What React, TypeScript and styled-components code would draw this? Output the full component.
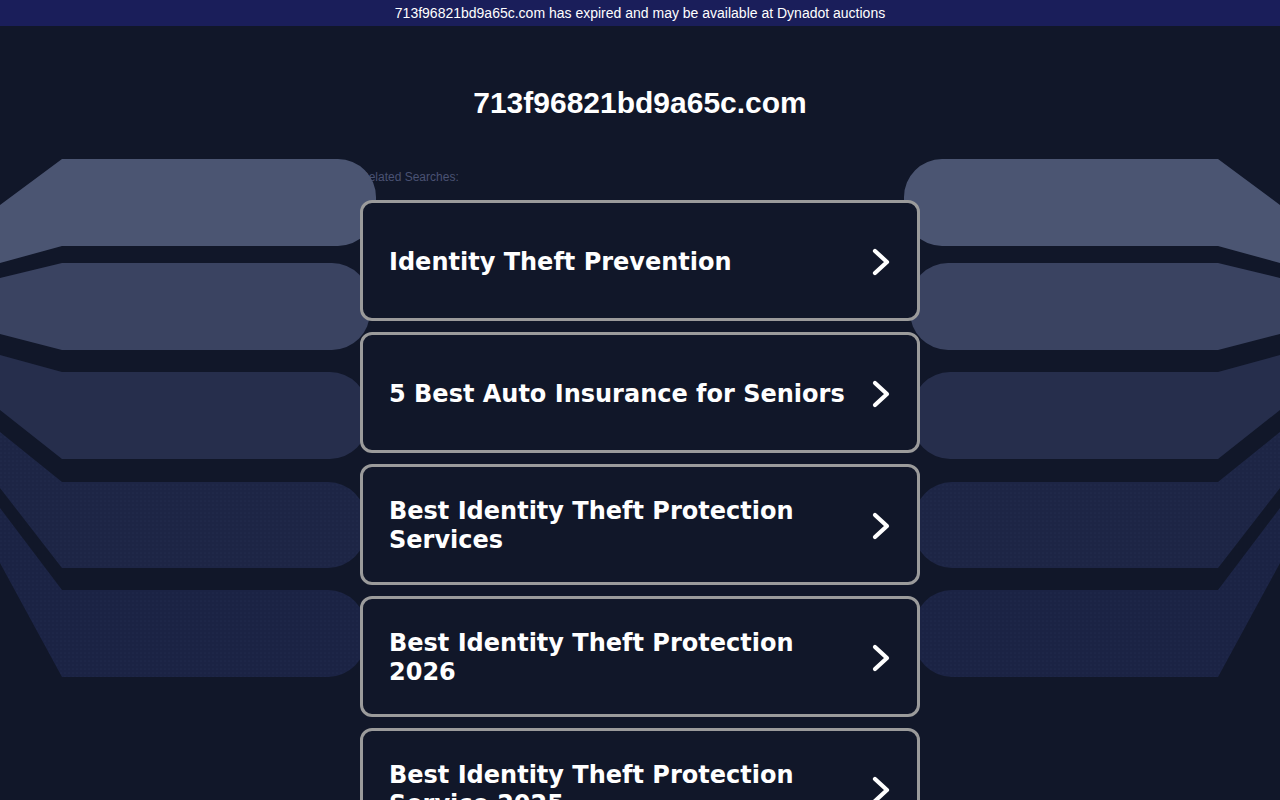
import React from 'react';
import styled, { createGlobalStyle } from 'styled-components';

const GlobalStyle = createGlobalStyle`
  html, body {
    margin: 0;
    padding: 0;
    background: #111729;
  }
  body {
    font-family: 'Liberation Sans', Arial, sans-serif;
    overflow: hidden;
  }
`;

const searches = [
  'Identity Theft Prevention',
  '5 Best Auto Insurance for Seniors',
  'Best Identity Theft Protection Services',
  'Best Identity Theft Protection 2026',
  'Best Identity Theft Protection Service 2025',
];

// left-hand band shapes; the right side is the same set mirrored
const bands = [
  { d: 'M0,205 L62,159 H338 A38,38 0 0 1 376,197 V208 A38,38 0 0 1 338,246 H62 L0,263 Z', fill: '#4b5572' },
  { d: 'M0,278 L62,263 H332 A38,38 0 0 1 370,301 V312 A38,38 0 0 1 332,350 H62 L0,334 Z', fill: '#3a4361' },
  { d: 'M0,355 L62,372 H330 A38,38 0 0 1 368,410 V421 A38,38 0 0 1 330,459 H62 L0,410 Z', fill: '#262e4c' },
  { d: 'M0,432 L62,482 H328 A38,38 0 0 1 366,520 V530 A38,38 0 0 1 328,568 H62 L0,488 Z', fill: 'url(#dots4)' },
  { d: 'M0,508 L62,590 H328 A38,38 0 0 1 366,628 V639 A38,38 0 0 1 328,677 H62 L0,563 Z', fill: 'url(#dots5)' },
];

const Backdrop = () => (
  <Decor viewBox="0 0 1280 800" aria-hidden="true">
    <defs>
      <pattern id="dots4" width="4" height="4" patternUnits="userSpaceOnUse">
        <rect width="4" height="4" fill="#1d2545" />
        <circle cx="1" cy="1" r="0.55" fill="#283156" />
      </pattern>
      <pattern id="dots5" width="4" height="4" patternUnits="userSpaceOnUse">
        <rect width="4" height="4" fill="#1b2344" />
        <circle cx="1" cy="1" r="0.55" fill="#262f55" />
      </pattern>
    </defs>
    <g>
      {bands.map((b, i) => (
        <path key={i} d={b.d} fill={b.fill} />
      ))}
    </g>
    <g transform="translate(1280,0) scale(-1,1)">
      {bands.map((b, i) => (
        <path key={i} d={b.d} fill={b.fill} />
      ))}
    </g>
  </Decor>
);

const Chevron = () => (
  <svg width="20" height="30" viewBox="0 0 20 30" aria-hidden="true">
    <path d="M5,4 L17,15 L5,26" fill="none" stroke="#fff" strokeWidth="4.2" strokeLinecap="round" strokeLinejoin="round" />
  </svg>
);

const App = () => {
  return (
    <Page>
      <GlobalStyle />
      <Backdrop />
      <TopBar>713f96821bd9a65c.com has expired and may be available at Dynadot auctions</TopBar>
      <Title>713f96821bd9a65c.com</Title>
      <Content>
        <Label>Related Searches:</Label>
        <List>
          {searches.map((s) => (
            <Card key={s} href="#">
              <CardText>{s}</CardText>
              <Arrow>
                <Chevron />
              </Arrow>
            </Card>
          ))}
        </List>
      </Content>
    </Page>
  );
};

const Page = styled.div`
  position: relative;
  width: 1280px;
  height: 800px;
  overflow: hidden;
  background: #111729;
`;

const Decor = styled.svg`
  position: absolute;
  top: 0;
  left: 0;
  width: 1280px;
  height: 800px;
  z-index: 1;
`;

const TopBar = styled.div`
  height: 26px;
  line-height: 26px;
  background: #1a1e5a;
  color: #ffffff;
  font-size: 14px;
  text-align: center;
`;

const Title = styled.h1`
  margin: 60px 0 0;
  font-size: 30px;
  line-height: 34px;
  font-weight: bold;
  color: #ffffff;
  text-align: center;
`;

const Content = styled.div`
  width: 560px;
  margin: 50px auto 0;
`;

const Label = styled.div`
  font-size: 12px;
  line-height: 14px;
  color: #4a5273;
  margin-bottom: 16px;
`;

const List = styled.div`
  position: relative;
  z-index: 2;
  display: flex;
  flex-direction: column;
  gap: 11px;
`;

const Card = styled.a`
  box-sizing: border-box;
  height: 121px;
  display: flex;
  align-items: center;
  gap: 20px;
  padding: 3px 27px 0 26px;
  border: 3px solid #9b9b9b;
  border-radius: 12px;
  background: #111729;
  text-decoration: none;
`;

const CardText = styled.span`
  flex: 1;
  font-family: 'DejaVu Sans', Verdana, sans-serif;
  font-weight: bold;
  font-size: 24px;
  line-height: 29px;
  color: #ffffff;
`;

const Arrow = styled.span`
  display: flex;
  align-items: center;
  width: 20px;
`;

export default App;
